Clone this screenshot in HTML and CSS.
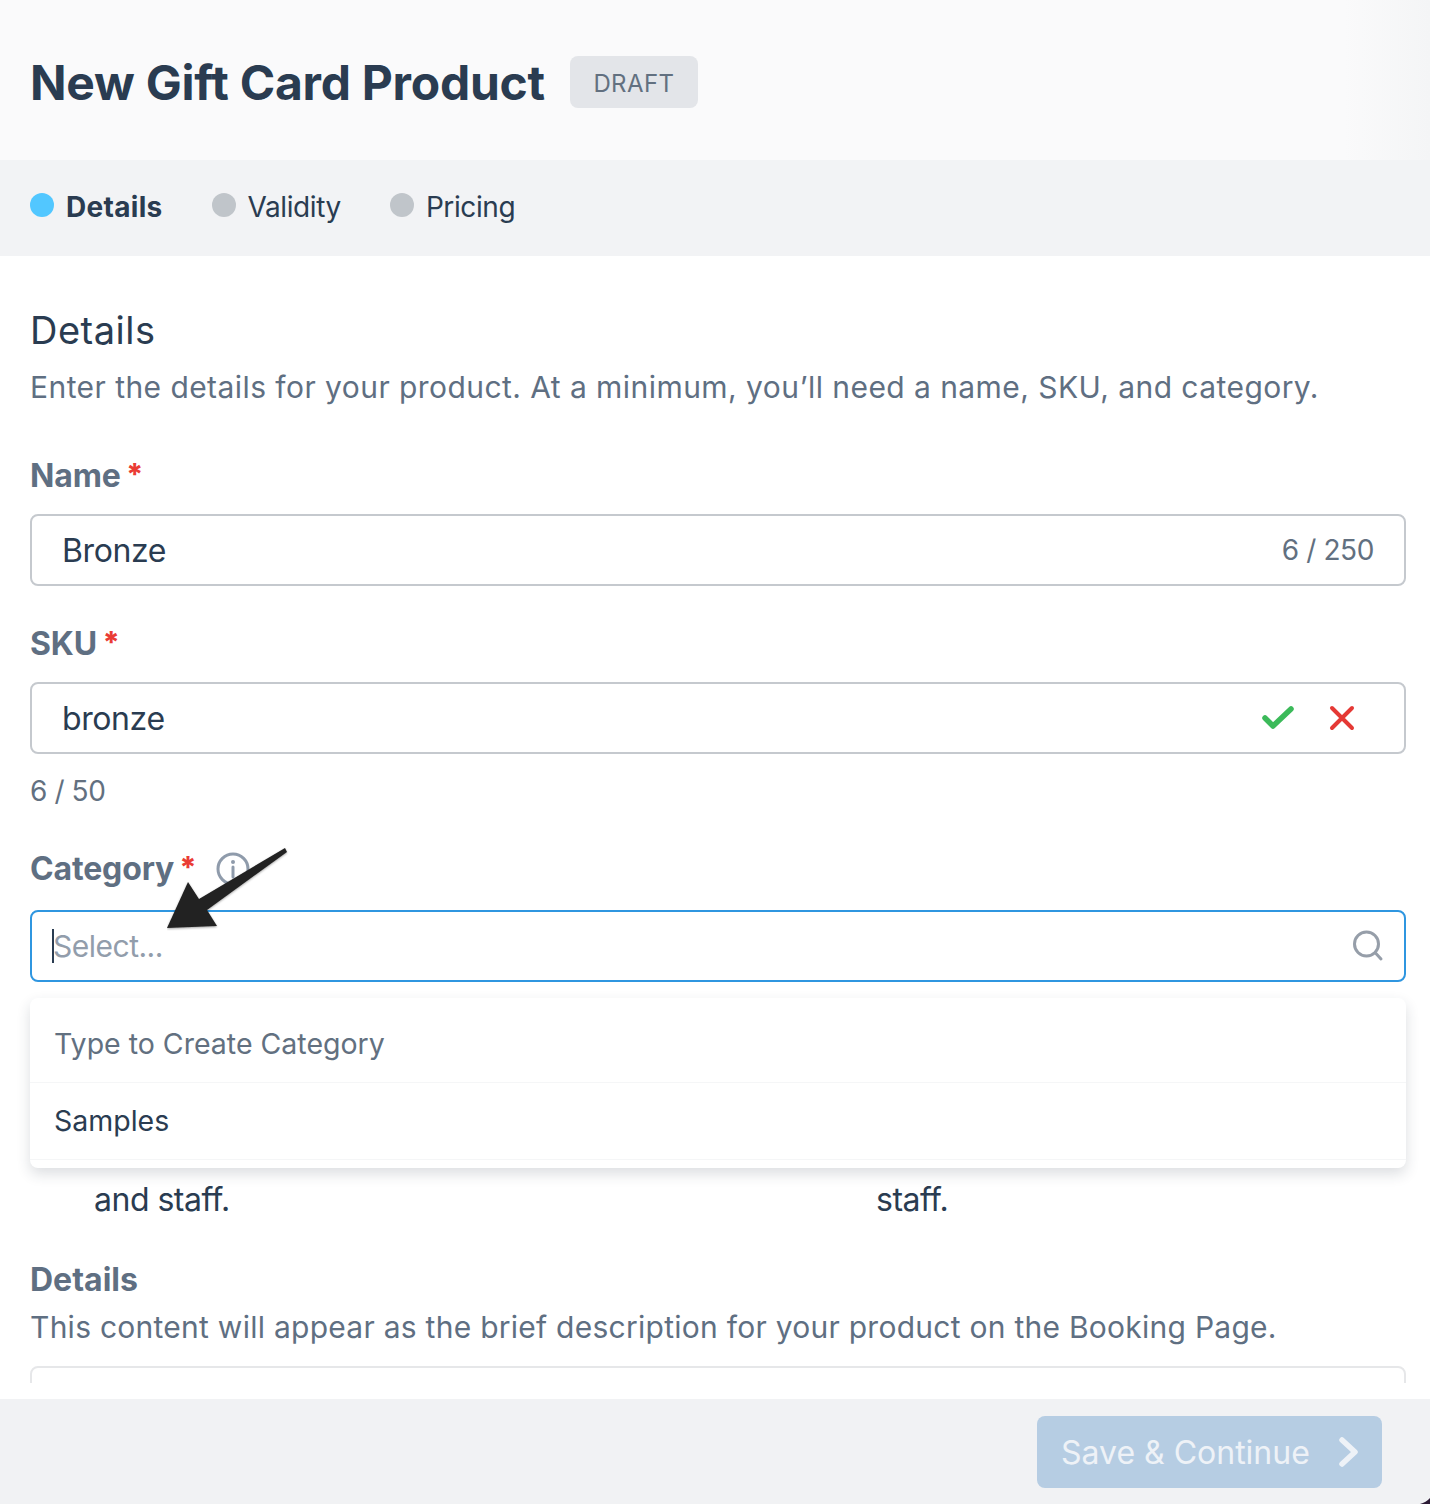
FILE: index.html
```html
<!DOCTYPE html>
<html>
<head>
    <title>New Gift Card Product</title>
    <link rel="stylesheet" href="styles.css">
</head>
<body>
    <div class="page">
        <div class="page-header">
            <h1>New Gift Card Product</h1>
            <span class="badge">DRAFT</span>
        </div>
        <div class="steps">
            <div class="step active"><span class="dot"></span>Details</div>
            <div class="step"><span class="dot"></span>Validity</div>
            <div class="step"><span class="dot"></span>Pricing</div>
        </div>
        <div class="content">
            <h2>Details</h2>
            <p class="intro">Enter the details for your product. At a minimum, you’ll need a name, SKU, and category.</p>

            <label class="label name-label">Name <span class="req">*</span></label>
            <div class="input">
                <span class="value">Bronze</span>
                <span class="count">6 / 250</span>
            </div>

            <label class="label sku-label">SKU <span class="req">*</span></label>
            <div class="input">
                <span class="value">bronze</span>
                <svg class="icon-check" width="36" height="28" viewBox="0 0 36 28">
                    <path d="M3 14 L11 22 L29 5" fill="none" stroke="#3cba5a" stroke-width="5.5" stroke-linejoin="round" stroke-linecap="round"/>
                </svg>
                <svg class="icon-x" width="28" height="28" viewBox="0 0 28 28">
                    <path d="M4 4 L24 24 M24 4 L4 24" fill="none" stroke="#e53935" stroke-width="4" stroke-linecap="round"/>
                </svg>
            </div>
            <div class="hint">6 / 50</div>

            <label class="label cat-label">Category <span class="req">*</span>
                <svg class="icon-info" width="34" height="34" viewBox="0 0 34 34">
                    <circle cx="17" cy="17" r="15" fill="none" stroke="#8f9bab" stroke-width="3"/>
                    <circle cx="17" cy="10" r="2" fill="#8f9bab"/>
                    <path d="M17 15 V25" stroke="#8f9bab" stroke-width="3" stroke-linecap="round"/>
                </svg>
            </label>
            <div class="select-wrap">
                <div class="input focused">
                    <span class="caret"></span>
                    <span class="placeholder">Select...</span>
                    <svg class="icon-search" width="34" height="34" viewBox="0 0 34 34">
                        <circle cx="16.5" cy="15" r="12" fill="none" stroke="#969ea9" stroke-width="3"/>
                        <path d="M25.5 24 L31 30" stroke="#969ea9" stroke-width="3" stroke-linecap="round"/>
                    </svg>
                </div>
                <div class="menu">
                    <div class="menu-item muted">Type to Create Category</div>
                    <div class="menu-item">Samples</div>
                </div>
            </div>

            <div class="radio-row">
                <div class="radio-text">and staff.</div>
                <div class="radio-text">staff.</div>
            </div>

            <label class="label details-label">Details</label>
            <p class="help">This content will appear as the brief description for your product on the Booking Page.</p>
            <div class="editor"></div>

            <svg class="arrow" width="140" height="100" viewBox="0 0 140 100">
                <defs>
                    <filter id="arrow-shadow" x="-10%" y="-10%" width="120%" height="130%">
                        <feDropShadow dx="0" dy="1" stdDeviation="1.2" flood-color="#000" flood-opacity="0.35"/>
                    </filter>
                </defs>
                <path d="M118 1 L120 5 L40 63 L50 79 L0 81 L21 35 L32 52 Z" fill="#222222" filter="url(#arrow-shadow)"/>
            </svg>
        </div>
        <div class="footer">
            <button class="save">Save &amp; Continue
                <svg width="22" height="30" viewBox="0 0 22 30">
                    <path d="M4 3 L17 15 L4 27" fill="none" stroke="#eef2f7" stroke-width="5.5" stroke-linecap="round" stroke-linejoin="round"/>
                </svg>
            </button>
        </div>
        <svg class="corner" width="10" height="6" viewBox="0 0 10 6">
            <path d="M0 6 Q6 4.5 10 0 V6 Z" fill="#2c1a35"/>
        </svg>
    </div>
</body>
</html>
```

FILE: styles.css
```css
body {
    margin: 0;
    background-color: #ffffff;
    font-family: Inter, "Liberation Sans", sans-serif;
    color: #2a3c51;
}
.page {
    position: relative;
    height: 1504px;
    display: flex;
    flex-direction: column;
    overflow: hidden;
}
.page-header {
    height: 160px;
    flex: none;
    display: flex;
    align-items: center;
    gap: 25px;
    padding-left: 30px;
    padding-top: 4px;
    box-sizing: border-box;
    background: linear-gradient(to right, #fafafb 94%, #f4f5f6 100%);
}
h1 {
    margin: 0;
    font-size: 48px;
    font-weight: 700;
    letter-spacing: -0.25px;
    color: #2a3c51;
}
.badge {
    width: 128px;
    height: 52px;
    line-height: 55px;
    text-align: center;
    border-radius: 8px;
    background-color: #e3e5e9;
    color: #627080;
    font-size: 24px;
    letter-spacing: 0.4px;
}
.steps {
    height: 96px;
    flex: none;
    display: flex;
    align-items: center;
    gap: 49px;
    padding-left: 30px;
    padding-bottom: 2px;
    box-sizing: border-box;
    background-color: #f2f3f5;
    letter-spacing: -0.4px;
}
.step {
    display: flex;
    align-items: center;
    gap: 12px;
    font-size: 28px;
}
.step.active {
    font-weight: 700;
    letter-spacing: 0.3px;
}
.dot {
    width: 24px;
    height: 24px;
    border-radius: 50%;
    margin-top: -4px;
    background-color: #c0c5ca;
}
.active .dot {
    background-color: #52c7ff;
}
.content {
    position: relative;
    height: 1127px;
    flex: none;
    overflow: hidden;
    padding: 48px 24px 0 30px;
    box-sizing: border-box;
}
h2 {
    margin: 0;
    font-size: 38px;
    line-height: 52px;
    font-weight: 400;
    letter-spacing: 0.5px;
}
.intro, .help {
    margin: 11px 0 0;
    font-size: 30px;
    line-height: 40px;
    color: #5f6f82;
}
.intro {
    letter-spacing: 0.44px;
}
.label {
    display: block;
    font-size: 32px;
    line-height: 48px;
    font-weight: 700;
    letter-spacing: -0.15px;
    color: #5f6f82;
    margin-bottom: 14px;
}
.name-label {
    margin-top: 45px;
}
.sku-label {
    margin-top: 34px;
}
.cat-label {
    margin-top: 34px;
    margin-bottom: 17px;
    display: flex;
    align-items: center;
    gap: 7px;
}
.req {
    margin-left: -2px;
    color: #ea3c35;
    font-size: 30px;
    font-weight: 800;
    line-height: 0;
    vertical-align: 2px;
}
.cat-label .req {
    margin-top: -4px;
}
.icon-info {
    margin-left: 12px;
}
.input {
    height: 72px;
    box-sizing: border-box;
    border: 2px solid #c5c9ce;
    border-radius: 8px;
    display: flex;
    align-items: center;
    padding: 0 30px;
    font-size: 32px;
}
.value {
    flex: 1;
    letter-spacing: -0.4px;
}
.count {
    font-size: 28px;
    letter-spacing: -0.4px;
    color: #627080;
}
.icon-check {
    margin-right: 30px;
}
.icon-x {
    margin-right: 18px;
}
.hint {
    margin-top: 17px;
    font-size: 28px;
    line-height: 40px;
    letter-spacing: -0.4px;
    color: #627080;
}
.select-wrap {
    position: relative;
}
.input.focused {
    border-color: #2f96e0;
    padding: 0 20px;
}
.caret {
    width: 2px;
    height: 34px;
    background-color: #2a3c51;
}
.placeholder {
    flex: 1;
    margin-left: -1px;
    font-size: 30px;
    letter-spacing: -0.5px;
    color: #929dab;
}
.menu {
    position: absolute;
    left: 0;
    right: 0;
    top: 88px;
    padding-top: 9px;
    padding-bottom: 8px;
    border-radius: 8px;
    background-color: #ffffff;
    box-shadow: 0 6px 14px rgba(40, 50, 70, 0.16);
}
.menu-item {
    height: 76px;
    line-height: 76px;
    padding-left: 24px;
    font-size: 28.5px;
    border-bottom: 1px solid #f5f6f7;
}
.menu-item.muted {
    height: 75px;
    line-height: 73px;
    color: #627080;
}
.radio-row {
    display: grid;
    grid-template-columns: 782px 1fr;
    padding-top: 198px;
    padding-left: 64px;
}
.radio-text {
    font-size: 32px;
    line-height: 40px;
    letter-spacing: -0.5px;
}
.details-label {
    margin-top: 36px;
    margin-bottom: 0;
    letter-spacing: 0;
}
.help {
    margin-top: 3px;
    letter-spacing: 0.26px;
}
.editor {
    height: 60px;
    margin-top: 19px;
    border: 2px solid #e6e7e9;
    border-radius: 8px;
}
.arrow {
    position: absolute;
    left: 167px;
    top: 591px;
}
.footer {
    flex: 1;
    margin-top: 16px;
    display: flex;
    justify-content: flex-end;
    align-items: flex-start;
    padding: 17px 48px 0 0;
    background-color: #f1f2f4;
}
.save {
    width: 345px;
    height: 72px;
    display: flex;
    align-items: center;
    justify-content: space-between;
    padding: 0 22px 0 24px;
    border: none;
    border-radius: 8px;
    background-color: #b6cde3;
    color: #eef2f7;
    font-family: Inter, "Liberation Sans", sans-serif;
    font-size: 32px;
}
.corner {
    position: absolute;
    right: 0;
    bottom: 0;
}
```
